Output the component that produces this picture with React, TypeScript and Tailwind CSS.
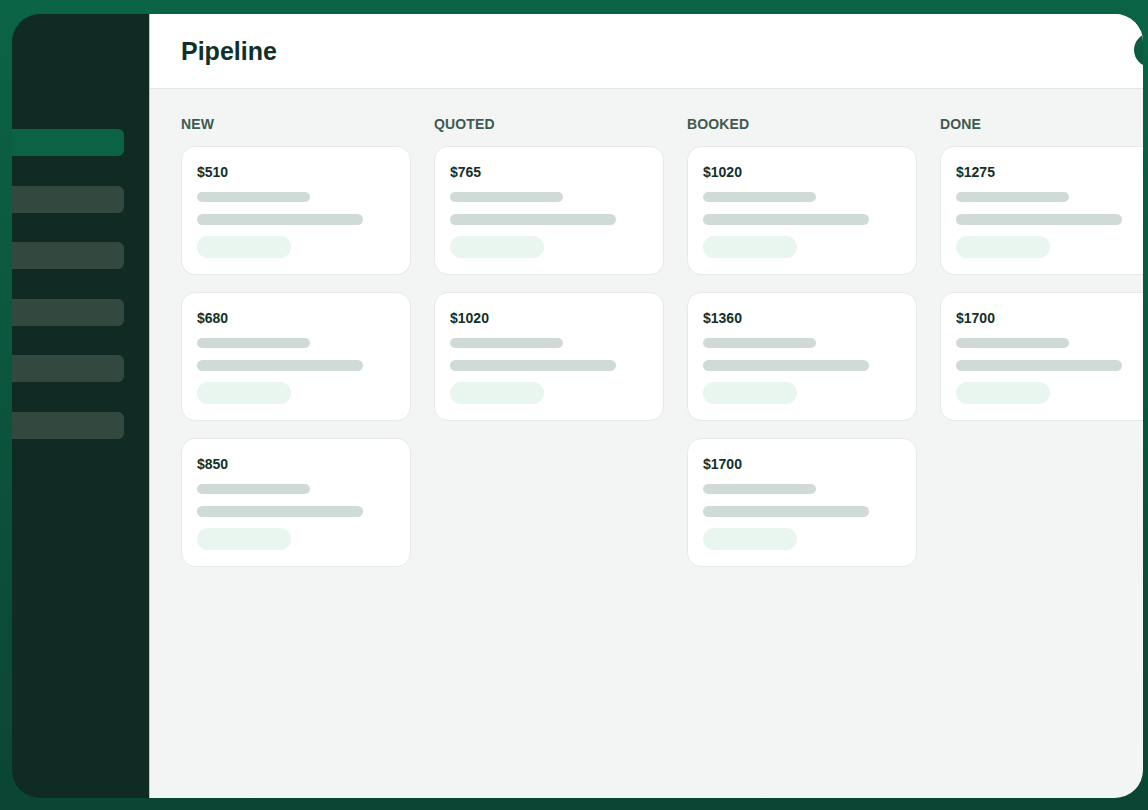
const columns = [
  { title: "NEW", deals: ["$510", "$680", "$850"] },
  { title: "QUOTED", deals: ["$765", "$1020"] },
  { title: "BOOKED", deals: ["$1020", "$1360", "$1700"] },
  { title: "DONE", deals: ["$1275", "$1700"] },
];

function DealCard({ price }: { price: string }) {
  return (
    <div className="w-[230px] h-[129px] shrink-0 rounded-[14px] border border-[#e5eae8] bg-white px-[15px] pt-[15px]">
      <div className="text-[14px] leading-5 font-bold text-[#133029]">{price}</div>
      <div className="mt-[10px] h-[10px] w-[113px] rounded-full bg-[#d0dad6]" />
      <div className="mt-[12px] h-[11px] w-[166px] rounded-full bg-[#d0dad6]" />
      <div className="mt-[11px] h-[22px] w-[94px] rounded-full bg-[#e9f5ef]" />
    </div>
  );
}

export default function App() {
  return (
    <div
      className="w-[1148px] h-[810px] overflow-hidden bg-gradient-to-b from-[#0b6446] to-[#0b4534] pt-[14px] pl-[12px] pr-[5px]"
      style={{ fontFamily: '"Liberation Sans", Arial, sans-serif' }}
    >
      <div className="relative flex h-[784px] w-[1131px] overflow-hidden rounded-[28px]">
        {/* sidebar */}
        <aside className="w-[137px] shrink-0 bg-[#0f2b24] pt-[115px]">
          <div className="flex flex-col gap-[29.5px]">
            <div className="h-[27px] w-[112px] rounded-r-[6px] bg-[#0b6244]" />
            {[0, 1, 2, 3, 4].map((i) => (
              <div key={i} className="h-[27px] w-[112px] rounded-r-[6px] bg-[#33493f]" />
            ))}
          </div>
        </aside>

        {/* main */}
        <main className="flex-1 min-w-0 border-l border-[#bcc5c1] bg-[#f3f5f4]">
          <header className="relative h-[75px] border-b border-[#e1e7e4] bg-white pl-[31px] flex items-center">
            <h1 className="text-[25px] font-bold text-[#10302a] leading-none mt-[1px]">Pipeline</h1>
            <div className="absolute left-[984px] top-[19px] h-[34px] w-[34px] rounded-full bg-[#0d5c42]" />
          </header>

          <div className="flex gap-[23px] pl-[31px] pt-[25px]">
            {columns.map((col) => (
              <section key={col.title} className="w-[230px] shrink-0">
                <h2 className="text-[14px] leading-5 font-bold text-[#3e5951] tracking-[0.01em]">
                  {col.title}
                </h2>
                <div className="mt-[12px] flex flex-col gap-[17px]">
                  {col.deals.map((d) => (
                    <DealCard key={d} price={d} />
                  ))}
                </div>
              </section>
            ))}
          </div>
        </main>
      </div>
    </div>
  );
}
